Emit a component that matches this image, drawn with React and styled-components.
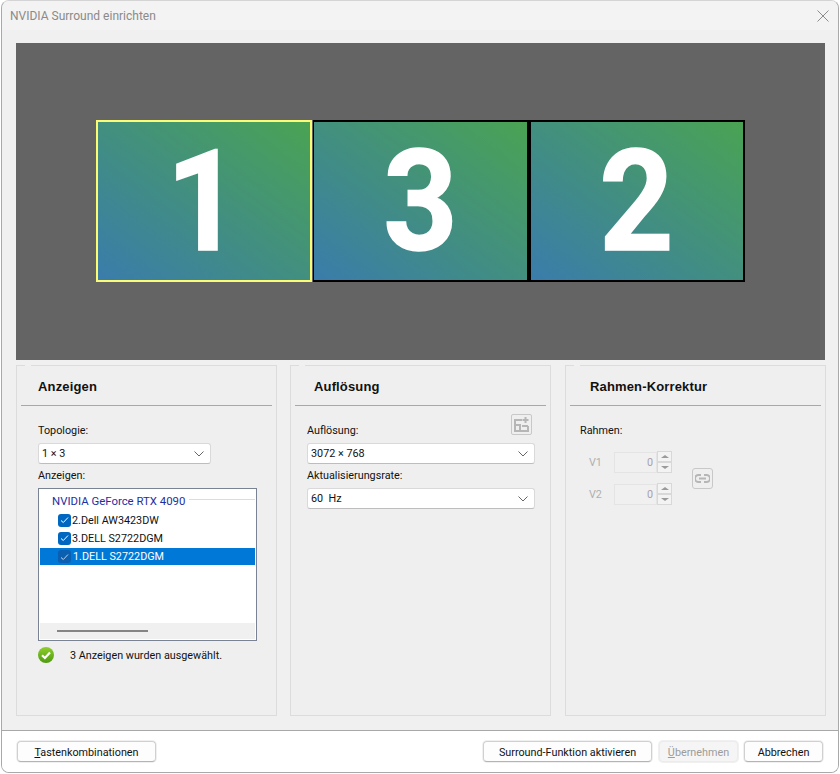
import styled, { createGlobalStyle } from "styled-components";

const GlobalStyle = createGlobalStyle`
  html, body { margin: 0; padding: 0; background: #fff; }
  body { font-family: Roboto, "Noto Sans", sans-serif; font-size: 10.8px; color: #111; }
`

const Dialog = styled.div`width: 838px; height: 773px; margin-left: 1px; box-sizing: border-box; border: 1px solid #a9a9a9; border-top-color: #d4d4d4; border-radius: 8px; display: flex; flex-direction: column; overflow: hidden; background: #f0f0f0;`
const TitleBar = styled.div`height: 29px; flex: none; background: #f3f3f3; display: flex; align-items: center; justify-content: space-between; padding: 0 9px 0 8px; color: #8a8a8a; font-size: 12px;`
const Body = styled.div`flex: 1; padding: 13px 12px 0 14px; display: flex; flex-direction: column; gap: 5px;`
const Preview = styled.div`height: 317px; margin-right: 1px; background: #646464; display: flex; justify-content: center; padding-top: 77px; box-sizing: border-box;`
const MonitorRow = styled.div`display: flex; margin-left: -1px;`
const Monitor = styled.div`width: 216px; height: 162px; box-sizing: border-box; border: 2px solid ${p => p.$active ? "#fbfb74" : "#000"}; border-left-width: ${p => p.$thin ? 1 : 2}px; margin-right: ${p => p.$active ? "1px" : "0"}; background: linear-gradient(to top right, #3a7cab, #4aa353); color: #fff; font-family: Roboto, sans-serif; font-weight: 700; font-size: 141px; line-height: 160px; text-align: center;`
const Digit = styled.span`display: inline-block; transform: scaleX(.92); -webkit-text-stroke: 1.5px #fff;`
const Panels = styled.div`display: grid; grid-template-columns: 274px 275px 261px; height: 351px;`
const Panel = styled.section`position: relative; width: 261px; box-sizing: border-box; border: 1px solid #dcdcdc; background: #efefef; display: flex; flex-direction: column; &::before { content: ""; position: absolute; left: 8px; top: -1px; width: 6px; height: 1px; background: #f0f0f0; }`
const PanelHead = styled.h2`margin: 0 4px; height: 40px; box-sizing: border-box; border-bottom: 1px solid #a8a8a8; padding: 13px 0 0 ${p => p.$indent}px; font: bold 13px/16px "Liberation Sans", sans-serif; letter-spacing: .15px; color: #111;`
const PanelBody = styled.div`position: relative; padding: ${p => p.$pad || "17px 0 0 21px"}; display: flex; flex-direction: column; align-items: flex-start;`
const Label = styled.div`height: 16px; line-height: 16px; margin-bottom: 4px;`
const SelectBox = styled.div`width: ${p => p.$w}px; height: 21px; box-sizing: border-box; background: #fff; border: 1px solid #d9d9d9; border-bottom-color: #bdbdbd; border-radius: 3px; display: flex; align-items: center; justify-content: space-between; padding: 0 6px 0 3px; margin-bottom: 4px;`
const ListBox = styled.div`width: 219px; height: 153px; box-sizing: border-box; border: 1px solid #7a8394; background: #fff; padding: 1px; display: flex; flex-direction: column;`
const GroupRow = styled.div`height: 21px; display: flex; align-items: center; gap: 4px; padding-left: 12px; color: #1f2f9f; font-size: 11.4px;`
const GroupLine = styled.span`flex: 1; height: 1px; background: #dcdcdc; margin-top: -2px;`
const Row = styled.div`height: ${p => p.$selected ? 17 : 18}px; margin-top: ${p => p.$selected ? 1 : 0}px; display: flex; align-items: center; gap: ${p => p.$selected ? 2 : 1}px; padding-left: 18px; background: ${p => p.$selected ? "#0078d7" : "transparent"}; color: ${p => p.$selected ? "#fff" : "#111"};`
const Check = styled.span`width: 13px; height: 13px; border-radius: 3px; background: ${p => p.$selected ? "#0a5fb0" : "#0067c0"}; display: flex; align-items: center; justify-content: center; flex: none;`
const ListSpace = styled.div`flex: 1;`
const ScrollTrack = styled.div`height: 16px; background: #f0f0f0; display: flex; align-items: center; padding-left: 17px;`
const ScrollThumb = styled.div`width: 91px; height: 2px; background: #858585;`
const Status = styled.div`display: flex; align-items: center; gap: 16px; margin-top: 6px;`
const AddButton = styled.div`position: absolute; top: 8px; left: 220px; width: 21px; height: 21px; box-sizing: border-box; border: 1px solid #c8c8c8; border-radius: 2px; display: flex; align-items: center; justify-content: center;`
const FrameRow = styled.div`display: flex; align-items: center; height: 32px;`
const FrameGrid = styled.div`display: flex; align-items: center; gap: 20px; margin-top: 3px; margin-left: 9px;`
const FrameCol = styled.div`display: flex; flex-direction: column;`
const FrameLabel = styled.span`width: 25px; color: #b0b0b0;`
const NumInput = styled.div`width: 43px; height: 21px; box-sizing: border-box; border: 1px solid #e4e4e4; background: #f0f0f0; color: #a9a1ad; text-align: right; line-height: 19px; padding-right: 3px;`
const Spin = styled.div`display: flex; flex-direction: column; margin-top: -1px;`
const SpinBtn = styled.div`width: 15px; height: 11px; box-sizing: border-box; border: 1px solid #d8d8d8; background: #f3f3f3; display: flex; align-items: center; justify-content: center; &::before { content: ""; border-left: 4px solid transparent; border-right: 4px solid transparent; ${p => p.$down ? "border-top: 3px solid #9a9a9a;" : "border-bottom: 3px solid #9a9a9a;"} }`
const LinkButton = styled.div`width: 21px; height: 21px; box-sizing: border-box; border: 1px solid #c8c8c8; border-radius: 3px; display: flex; align-items: center; justify-content: center;`
const Footer = styled.footer`height: 42px; flex: none; margin-top: 14px; border-top: 1px solid #a8a8a8; background: #fff; display: flex; align-items: center; justify-content: space-between; padding: 0 15px; box-sizing: border-box;`
const ButtonGroup = styled.div`display: flex; gap: 6px;`
const Button = styled.button`width: ${p => p.$w}px; height: 21px; padding: 1px 0 0; margin-right: ${p => p.$mr || 0}px; box-sizing: border-box; font: inherit; color: ${p => p.disabled ? "#9c9c9c" : "#111"}; background: ${p => p.disabled ? "#f5f5f5" : "#fdfdfd"}; border: 1px solid ${p => p.disabled ? "#ececec" : "#d0d0d0"}; border-bottom-color: ${p => p.disabled ? "#ececec" : "#b4b4b4"}; border-radius: 4px; box-shadow: 0 0 0 1px #f0f0f0;`

const Chevron = () => (
  <svg width="10" height="6" viewBox="0 0 10 6" fill="none" stroke="#666" strokeWidth="1"><path d="M.5.5 5 5 9.500.5" /></svg>
)

const Tick = ({ selected }) => (
  <Check $selected={selected}>
    <svg width="9" height="8" viewBox="0 0 9 8" fill="none" stroke={selected ? "#b9d4ee" : "#fff"} strokeWidth="1"><path d="M1 4.500 3.300 6.500 8 1.500" /></svg>
  </Check>
)

const CloseIcon = () => (
  <svg width="12" height="12" viewBox="0 0 12 12" stroke="#8c8c8c" strokeWidth="1"><path d="M.5.5l11 11M11.500.5l-11 11" /></svg>
)

const OkIcon = () => (
  <svg width="16" height="16" viewBox="0 0 16 16">
    <defs>
      <linearGradient id="ok" x1="0" y1="0" x2="0" y2="1">
        <stop offset="0" stopColor="#8fce2c" />
        <stop offset="1" stopColor="#4e9a12" />
      </linearGradient>
    </defs>
    <circle cx="8" cy="8" r="8" fill="url(#ok)" />
    <path d="M4 8.200 6.900 11 12 5.500" fill="none" stroke="#fff" strokeWidth="2.200" />
  </svg>
)

const AddResIcon = () => (
  <svg width="17" height="17" viewBox="0 0 17 17" fill="none" stroke="#b6b6b6" strokeWidth="2">
    <path d="M1 4h8M2 4v11h13V10M2 9h5v6M9 10h6" />
    <path d="M12.500 1v6M9.500 4h6" />
  </svg>
)

const LinkIcon = () => (
  <svg width="15" height="9" viewBox="0 0 15 9" fill="none" stroke="#b6b6b6" strokeWidth="2">
    <path d="M6 1H3.500a3.500 3.500 0 0 0 0 7H6M9 1h2.500a3.500 3.500 0 0 1 0 7H9M4 4.500h7" />
  </svg>
)

const App = () => {
  return (
    <>
      <GlobalStyle />
      <Dialog>
        <TitleBar>
          <span>NVIDIA Surround einrichten</span>
          <CloseIcon />
        </TitleBar>
        <Body>
          <Preview>
            <MonitorRow>
              <Monitor $active><Digit>1</Digit></Monitor>
              <Monitor $thin><Digit>3</Digit></Monitor>
              <Monitor><Digit>2</Digit></Monitor>
            </MonitorRow>
          </Preview>
          <Panels>
            <Panel>
              <PanelHead $indent={17}>Anzeigen</PanelHead>
              <PanelBody>
                <Label>Topologie:</Label>
                <SelectBox $w={173}>1 × 3<Chevron /></SelectBox>
                <Label>Anzeigen:</Label>
                <ListBox>
                  <GroupRow>NVIDIA GeForce RTX 4090<GroupLine /></GroupRow>
                  <Row><Tick />2.Dell AW3423DW</Row>
                  <Row><Tick />3.DELL S2722DGM</Row>
                  <Row $selected><Tick selected />1.DELL S2722DGM</Row>
                  <ListSpace />
                  <ScrollTrack><ScrollThumb /></ScrollTrack>
                </ListBox>
                <Status><OkIcon />3 Anzeigen wurden ausgewählt.</Status>
              </PanelBody>
            </Panel>
            <Panel>
              <PanelHead $indent={19}>Auflösung</PanelHead>
              <PanelBody $pad="17px 0 0 16px">
                <AddButton><AddResIcon /></AddButton>
                <Label>Auflösung:</Label>
                <SelectBox $w={228}>3072 × 768<Chevron /></SelectBox>
                <Label>Aktualisierungsrate:</Label>
                <SelectBox $w={228}>60&nbsp; Hz<Chevron /></SelectBox>
              </PanelBody>
            </Panel>
            <Panel>
              <PanelHead $indent={20}>Rahmen-Korrektur</PanelHead>
              <PanelBody $pad="17px 0 0 14px">
                <Label>Rahmen:</Label>
                <FrameGrid>
                  <FrameCol>
                    <FrameRow>
                      <FrameLabel>V1</FrameLabel>
                      <NumInput>0</NumInput>
                      <Spin><SpinBtn /><SpinBtn $down /></Spin>
                    </FrameRow>
                    <FrameRow>
                      <FrameLabel>V2</FrameLabel>
                      <NumInput>0</NumInput>
                      <Spin><SpinBtn /><SpinBtn $down /></Spin>
                    </FrameRow>
                  </FrameCol>
                  <LinkButton><LinkIcon /></LinkButton>
                </FrameGrid>
              </PanelBody>
            </Panel>
          </Panels>
        </Body>
        <Footer>
          <Button $w={139}><u>T</u>astenkombinationen</Button>
          <ButtonGroup>
            <Button $w={169} $mr={1}>Surround-Funktion aktivieren</Button>
            <Button $w={79} disabled><u>Ü</u>bernehmen</Button>
            <Button $w={79}>Abbrechen</Button>
          </ButtonGroup>
        </Footer>
      </Dialog>
    </>
  )
}

export default App
